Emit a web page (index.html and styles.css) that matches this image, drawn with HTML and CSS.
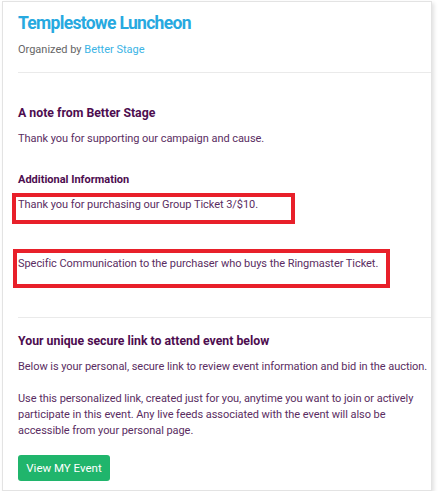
FILE: index.html
```html
<!DOCTYPE html>
<html>
<head>
<meta charset="utf-8">
<link rel="stylesheet" href="styles.css">
</head>
<body>
<div class="card">
  <header class="head">
    <h1 class="title">Templestowe Luncheon</h1>
    <p class="org">Organized by <a class="org-link" href="#">Better Stage</a></p>
  </header>
  <hr class="rule rule-top">
  <section class="note">
    <h2 class="h2">A note from Better Stage</h2>
    <p class="text">Thank you for supporting our campaign and cause.</p>
    <h3 class="h3">Additional Information</h3>
    <div class="mark mark-one">
      <p class="text">Thank you for purchasing our Group Ticket 3/$10.</p>
    </div>
    <div class="mark mark-two">
      <p class="text">Specific Communication to the purchaser who buys the Ringmaster Ticket.</p>
    </div>
  </section>
  <hr class="rule">
  <section class="link">
    <h2 class="h2">Your unique secure link to attend event below</h2>
    <p class="text">Below is your personal, secure link to review event information and bid in the auction.</p>
    <p class="text para">Use this personalized link, created just for you, anytime you want to join or actively participate in this event. Any live feeds associated with the event will also be accessible from your personal page.</p>
    <a class="btn" href="#">View MY Event</a>
  </section>
</div>
</body>
</html>
```

FILE: styles.css
```css
*, *::before, *::after { box-sizing: border-box; }
html, body { margin: 0; padding: 0; background: #fff; }
body { font-family: Roboto, "Liberation Sans", Arial, sans-serif; }

.card {
  margin: 1px 0 0 2px;
  width: 430px;
  height: 490px;
  border: 1px solid #e3e3e3;
  box-shadow: 2px 2px 4px rgba(0,0,0,0.12);
  padding: 9px 0 0 15px;
  background: #fff;
}

.title {
  margin: 0;
  font-size: 17.5px;
  line-height: 24px;
  font-weight: 700;
  letter-spacing: -0.7px;
  color: #27a9e0;
}

.org {
  margin: 7px 0 0;
  font-size: 11px;
  line-height: 16px;
  color: #666;
}
.org-link { color: #3bb4e5; text-decoration: none; }

.rule {
  margin: 0;
  border: 0;
  border-top: 1px solid #eaeaea;
  height: 0;
}
.rule-top { margin-top: 14px; }

.h2 {
  margin: 0;
  font-size: 12.3px;
  line-height: 16px;
  font-weight: 700;
  color: #4d0d4f;
}
.h3 {
  margin: 26px 0 0;
  font-size: 11px;
  line-height: 14px;
  font-weight: 700;
  color: #4d0d4f;
}

.text {
  margin: 0;
  font-size: 11px;
  line-height: 16px;
  letter-spacing: -0.05px;
  color: #5a2d62;
}

.note { padding: 32px 0 45px; }
.note .h2 + .text { margin-top: 10px; }

.mark { position: relative; }
.mark::before {
  content: "";
  position: absolute;
  border: 4px solid #e8202a;
  pointer-events: none;
}
.mark-one { margin-top: 10px; }
.mark-one::before { left: -6px; top: -4px; width: 283px; height: 31px; }
.mark-two { margin-top: 43px; }
.mark-two::before { left: -5px; top: -7px; width: 377px; height: 39px; }

.link { padding: 15px 0 0; }
.link .h2 + .text { margin-top: 10px; }
.para { margin-top: 16px; padding-right: 10px; }

.btn {
  display: inline-flex;
  align-items: center;
  justify-content: center;
  margin-top: 16px;
  width: 92px;
  height: 26px;
  background: #20b56c;
  color: #fff;
  border-radius: 3px;
  font-size: 11.5px;
  text-decoration: none;
}
```
